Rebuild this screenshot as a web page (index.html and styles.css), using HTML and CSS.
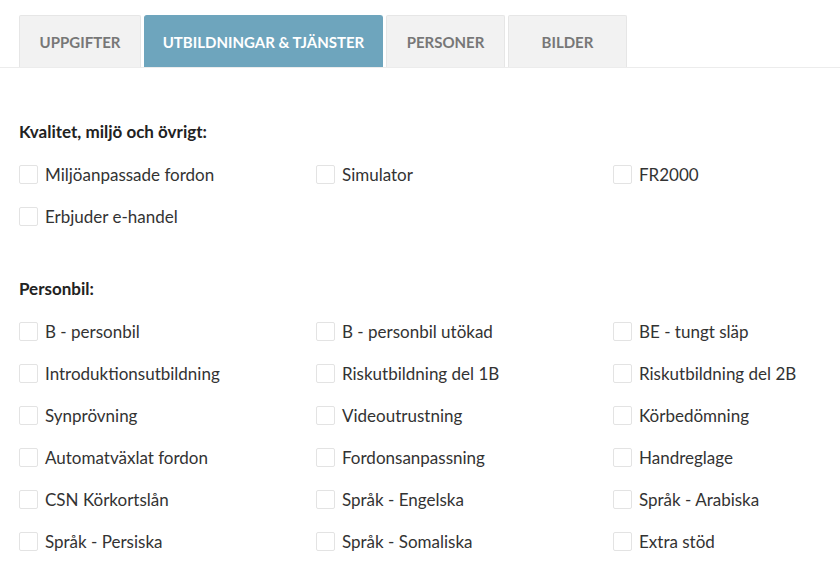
FILE: index.html
```
<!DOCTYPE html>
<html lang="sv">
<head>
<meta charset="utf-8">
<title>Utbildningar &amp; tjänster</title>
<link rel="stylesheet" href="styles.css">
</head>
<body>
<nav class="tabs">
  <a class="tab tab-1">UPPGIFTER</a>
  <a class="tab tab-2 active">UTBILDNINGAR &amp; TJÄNSTER</a>
  <a class="tab tab-3">PERSONER</a>
  <a class="tab tab-4">BILDER</a>
</nav>
<main class="content">
  <section class="group group-first">
    <h3 class="group-title">Kvalitet, miljö och övrigt:</h3>
    <div class="options">
      <label class="option"><span class="box"></span>Miljöanpassade fordon</label>
      <label class="option"><span class="box"></span>Simulator</label>
      <label class="option"><span class="box"></span>FR2000</label>
      <label class="option"><span class="box"></span>Erbjuder e-handel</label>
    </div>
  </section>
  <section class="group">
    <h3 class="group-title">Personbil:</h3>
    <div class="options">
      <label class="option"><span class="box"></span>B - personbil</label>
      <label class="option"><span class="box"></span>B - personbil utökad</label>
      <label class="option"><span class="box"></span>BE - tungt släp</label>
      <label class="option"><span class="box"></span>Introduktionsutbildning</label>
      <label class="option"><span class="box"></span>Riskutbildning del 1B</label>
      <label class="option"><span class="box"></span>Riskutbildning del 2B</label>
      <label class="option"><span class="box"></span>Synprövning</label>
      <label class="option"><span class="box"></span>Videoutrustning</label>
      <label class="option"><span class="box"></span>Körbedömning</label>
      <label class="option"><span class="box"></span>Automatväxlat fordon</label>
      <label class="option"><span class="box"></span>Fordonsanpassning</label>
      <label class="option"><span class="box"></span>Handreglage</label>
      <label class="option"><span class="box"></span>CSN Körkortslån</label>
      <label class="option"><span class="box"></span>Språk - Engelska</label>
      <label class="option"><span class="box"></span>Språk - Arabiska</label>
      <label class="option"><span class="box"></span>Språk - Persiska</label>
      <label class="option"><span class="box"></span>Språk - Somaliska</label>
      <label class="option"><span class="box"></span>Extra stöd</label>
    </div>
  </section>
</main>
</body>
</html>
```
FILE: styles.css
```
* { box-sizing: border-box; }
html, body { margin: 0; padding: 0; background: #fff; }
body {
  font-family: Lato, "Noto Sans", "Liberation Sans", sans-serif;
  color: #333;
  overflow: hidden;
}
.tabs {
  display: flex;
  gap: 3px;
  padding: 15px 0 0 19px;
  border-bottom: 1px solid #ececec;
}
.tab {
  display: flex;
  align-items: center;
  justify-content: center;
  height: 52px;
  background: #f2f2f2;
  border: 1px solid #e6e6e6;
  border-bottom: none;
  border-radius: 2px 2px 0 0;
  color: #777;
  font-weight: 700;
  font-size: 15px;
  letter-spacing: 0;
}
.tab-1 { width: 122px; }
.tab-2 { width: 239px; }
.tab-3 { width: 119px; }
.tab-4 { width: 119px; }
.tab.active {
  background: #6ea5bd;
  border-color: #6ea5bd;
  color: #fff;
  border-radius: 3px 3px 0 0;
}
.content { padding: 0 0 0 19px; }
.group-first { padding-top: 52px; }
.group { padding-top: 40px; }
.group-first { padding-top: 52px; }
.group-title {
  margin: 0;
  font-size: 17px;
  font-weight: 700;
  color: #222;
  line-height: 24px;
}
.options {
  display: grid;
  grid-template-columns: 297px 297px 1fr;
  grid-auto-rows: 42px;
  padding-top: 9px;
}
.option {
  display: flex;
  align-items: center;
  font-size: 17px;
  color: #333;
}
.box {
  width: 19px;
  height: 19px;
  border: 1px solid #e3e3e3;
  border-radius: 2px;
  margin-right: 7px;
  flex: none;
}
```
